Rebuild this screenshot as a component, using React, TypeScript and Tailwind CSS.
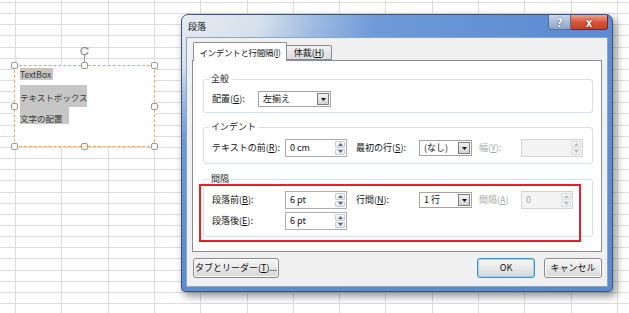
import clsx from "clsx";

const JP = "font-['Noto_Sans_CJK_JP','Noto_Sans',sans-serif]";

function Tri({ up, disabled }: { up?: boolean; disabled?: boolean }) {
  return (
    <svg width="5" height="3" viewBox="0 0 5 3" className={disabled ? "fill-[#b9bcc2]" : "fill-[#55657f]"}>
      <path d={up ? "M0 3L2.5 0L5 3Z" : "M0 0H5L2.5 3Z"} />
    </svg>
  );
}

function SpinBox({ value, narrow, disabled }: { value: string; narrow?: boolean; disabled?: boolean }) {
  return (
    <div
      className={clsx(
        "flex h-[18px] items-stretch border",
        narrow ? "w-[52px]" : "w-[62px]",
        disabled ? "border-[#d2d4d8] bg-[#f4f4f4] text-[#a6a6a6]" : "border-[#abadb3] bg-white text-[#111]"
      )}
    >
      <span className="flex-1 pl-[4px] leading-[16px]">{value}</span>
      <div className="flex w-[12px] flex-col gap-px p-px">
        <div
          className={clsx(
            "flex flex-1 items-center justify-center rounded-[1px] border bg-gradient-to-b",
            disabled ? "border-[#dcdde0] from-[#f7f7f7] to-[#eeeeee]" : "border-[#c6cbd6] from-[#f7f9fc] to-[#e3e8f0]"
          )}
        >
          <Tri up disabled={disabled} />
        </div>
        <div
          className={clsx(
            "flex flex-1 items-center justify-center rounded-[1px] border bg-gradient-to-b",
            disabled ? "border-[#dcdde0] from-[#f7f7f7] to-[#eeeeee]" : "border-[#c6cbd6] from-[#f7f9fc] to-[#e3e8f0]"
          )}
        >
          <Tri disabled={disabled} />
        </div>
      </div>
    </div>
  );
}

function Combo({ value, wide }: { value: string; wide?: boolean }) {
  return (
    <div className={clsx("flex h-[16px] items-stretch border border-[#a3a3a3] bg-white", wide ? "w-[73px]" : "w-[53px]")}>
      <span className="flex-1 pl-[4px] leading-[14px] text-[#111]">{value}</span>
      <div className="m-px flex w-[12px] items-center justify-center border border-[#7c7c7c] bg-gradient-to-b from-[#f3f3f3] to-[#d2d2d2]">
        <svg width="5" height="3" viewBox="0 0 5 3">
          <path d="M0 0H5L2.5 3Z" fill="#111" />
        </svg>
      </div>
    </div>
  );
}

function Group({ title, className, children }: { title: string; className: string; children: React.ReactNode }) {
  return (
    <div className={clsx("relative rounded-[3px] border border-[#d5dfe5] pl-[8px] pt-[11px]", className)}>
      <span className="absolute left-[5px] top-[-7px] bg-white px-[2px] leading-[12px] text-[#1a1a1a]">{title}</span>
      {children}
    </div>
  );
}

function Btn({ children, primary, className }: { children: React.ReactNode; primary?: boolean; className: string }) {
  return (
    <div
      className={clsx(
        "flex h-[20px] items-center justify-center whitespace-nowrap rounded-[3px] border bg-gradient-to-b from-[#f6f6f6] via-[#e8e8e8] to-[#d6d6d6] text-[#111]",
        primary ? "border-[#3c8fc8] shadow-[inset_0_0_0_1px_#9ed4f2]" : "border-[#8a8a8a] shadow-[inset_0_0_0_1px_#fbfbfb]",
        className
      )}
    >
      {children}
    </div>
  );
}

function Handle({ className }: { className: string }) {
  return <div className={clsx("absolute h-[7px] w-[7px] rounded-[2px] border border-[#9a9a9a] bg-white", className)} />;
}

export default function App() {
  return (
    <div
      className={clsx(
        "relative h-[313px] w-[629px] overflow-hidden bg-white text-[9px]",
        JP,
        "bg-[image:repeating-linear-gradient(to_right,transparent_0,transparent_15px,#dcdddd_15px,#dcdddd_16px,transparent_16px,transparent_46.3px),repeating-linear-gradient(to_bottom,transparent_0,transparent_2px,#dcdddd_2px,#dcdddd_3px,transparent_3px,transparent_11.15px)]"
      )}
    >
      {/* text box shape on the sheet */}
      <div className="absolute left-[14px] top-[65px] h-[82px] w-[141px] border border-dashed border-[#f2a35e] bg-white">
        <div className="flex flex-col whitespace-nowrap pl-[5px] pt-[2px] text-[8.5px] text-[#3a3a3a]">
          <div className="h-[12px] w-[33px] bg-[#c6c6c6] leading-[12px]">TextBox</div>
          <div className="mt-[5px] flex h-[22px] w-[67px] items-end bg-[#c6c6c6] pb-[4px] leading-[12px]">テキストボックス</div>
          <div className="flex h-[17px] w-[49px] items-end bg-[#c6c6c6] leading-[12px]">文字の配置</div>
        </div>
        <Handle className="left-[-4px] top-[-4px]" />
        <Handle className="left-[66px] top-[-4px]" />
        <Handle className="right-[-4px] top-[-4px]" />
        <Handle className="left-[-4px] top-[37px]" />
        <Handle className="right-[-4px] top-[37px]" />
        <Handle className="bottom-[-4px] left-[-4px]" />
        <Handle className="bottom-[-4px] left-[66px]" />
        <Handle className="bottom-[-4px] right-[-4px]" />
        <div className="absolute left-[69px] top-[-11px] h-[7px] w-px bg-[#9a9a9a]" />
        <svg className="absolute left-[64px] top-[-20px]" width="11" height="10" viewBox="0 0 11 10">
          <path d="M8.6 3.2A3.6 3.6 0 1 0 9 6" fill="none" stroke="#8f9a8f" strokeWidth="1.3" />
          <path d="M7 2.4L9.6 1.2L9.3 4.2Z" fill="#8f9a8f" />
        </svg>
      </div>

      {/* paragraph dialog */}
      <div className="absolute left-[181px] top-[14px] flex h-[278px] w-[432px] flex-col rounded-t-[7px] rounded-b-[4px] border border-[#3e5675] bg-[radial-gradient(ellipse_at_top_left,#e6ebf0_0%,#d6e0ec_13%,#9cbae2_22%,#6e9ad8_32%,#5f8dd4_60%,#5a89d2_100%)] px-[4px] pb-[4px] shadow-[3px_4px_8px_rgba(0,0,0,0.45)]">
        <div className="flex h-[23px] items-start">
          <span className="pl-[2px] pt-[6px] text-[9px] leading-[12px] text-[#111]">段落</span>
          <div className="ml-auto flex h-[15px]">
            <div className="flex w-[23px] items-center justify-center rounded-bl-[3px] border border-t-0 border-[#5a6f8e] bg-gradient-to-b from-[#c9d7ea] to-[#8aa3c9] text-[11px] font-bold leading-none text-white [text-shadow:0_0_2px_#2b3a55]">
              ?
            </div>
            <div className="flex w-[37px] items-center justify-center rounded-br-[3px] border border-l-0 border-t-0 border-[#6a2a24] bg-gradient-to-b from-[#eba18f] via-[#d8553c] to-[#c7402a] text-[11px] font-bold leading-none text-white [text-shadow:0_0_2px_#4a1510]">
              x
            </div>
          </div>
        </div>

        <div className="flex flex-1 flex-col border border-[#8ca4c5] bg-[#f0f0f0] pb-[8px] pt-[4px]">
          {/* tabs */}
          <div className="relative z-10 flex h-[18px] items-end pl-[6px]">
            <div className="-mb-px flex h-[19px] w-[94px] items-center justify-center whitespace-nowrap rounded-t-[2px] border border-b-0 border-[#898c95] bg-white text-[8.5px] tracking-[-0.3px] text-[#111]">
              インデントと行間隔(<u>I</u>)
            </div>
            <div className="flex h-[15px] w-[45px] items-center justify-center whitespace-nowrap rounded-tr-[2px] border border-l-0 border-[#898c95] bg-gradient-to-b from-[#f2f2f2] to-[#dcdcdc] text-[#111]">
              体裁(<u>H</u>)
            </div>
          </div>

          {/* tab page */}
          <div className="mx-[5px] flex h-[192px] flex-col whitespace-nowrap border border-[#898c95] bg-white pl-[10px] pr-[8px]">
            <Group title="全般" className="mt-[18px] h-[34px]">
              <div className="flex items-center">
                <span className="w-[46px] text-[#111]">
                  配置(<u>G</u>):
                </span>
                <Combo value="左揃え" wide />
              </div>
            </Group>

            <Group title="インデント" className="mt-[14px] h-[37px]">
              <div className="flex items-center">
                <span className="w-[73px] text-[#111]">
                  テキストの前(<u>R</u>):
                </span>
                <SpinBox value="0 cm" />
                <span className="ml-[9px] w-[63px] text-[#111]">
                  最初の行(<u>S</u>):
                </span>
                <Combo value="(なし)" />
                <span className="ml-[7px] w-[42px] text-[#a6a6a6]">
                  幅(<u>Y</u>):
                </span>
                <SpinBox value="" disabled />
              </div>
            </Group>

            <Group title="間隔" className="mt-[15px] h-[58px]">
              <div className="flex flex-col gap-[3px]">
                <div className="flex items-center">
                  <span className="w-[73px] text-[#111]">
                    段落前(<u>B</u>):
                  </span>
                  <SpinBox value="6 pt" />
                  <span className="ml-[9px] w-[63px] text-[#111]">
                    行間(<u>N</u>):
                  </span>
                  <Combo value="1 行" />
                  <span className="ml-[7px] w-[42px] text-[#a6a6a6]">
                    間隔(<u>A</u>)
                  </span>
                  <SpinBox value="0" narrow disabled />
                </div>
                <div className="flex items-center">
                  <span className="w-[73px] text-[#111]">
                    段落後(<u>E</u>):
                  </span>
                  <SpinBox value="6 pt" />
                </div>
              </div>
            </Group>
          </div>

          {/* buttons */}
          <div className="mt-[6px] flex pl-[6px] pr-[5px]">
            <Btn className="w-[86px]">
              タブとリーダー(<u>T</u>)...
            </Btn>
            <Btn primary className="ml-auto w-[58px]">
              OK
            </Btn>
            <Btn className="ml-[9px] w-[58px]">キャンセル</Btn>
          </div>
        </div>
      </div>

      {/* red annotation frame */}
      <div className="absolute left-[199px] top-[184px] h-[58px] w-[382px] border-2 border-[#ee1c24]" />
    </div>
  );
}
